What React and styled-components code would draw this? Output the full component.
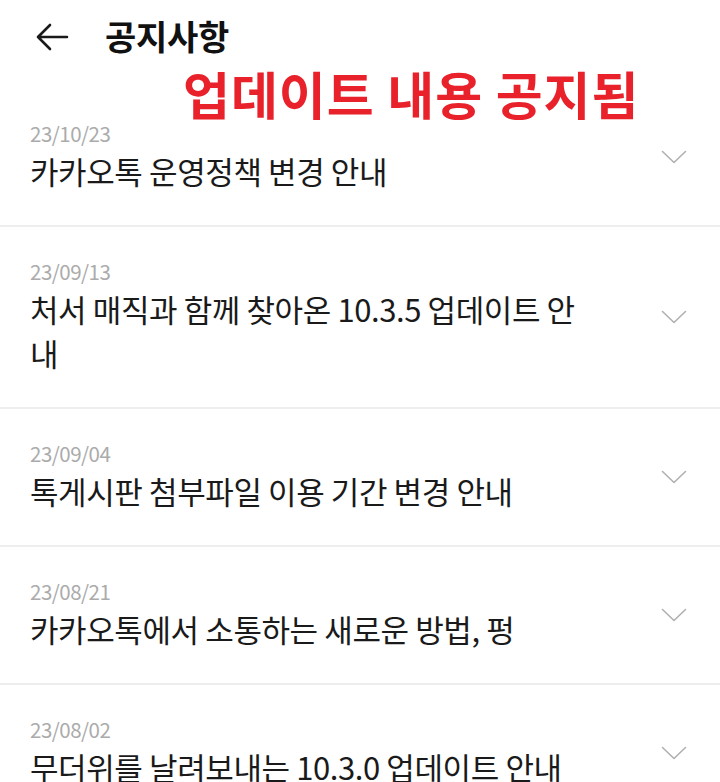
import styled, { createGlobalStyle } from 'styled-components';

const GlobalStyle = createGlobalStyle`
  html, body {
    margin: 0;
    padding: 0;
    background: #ffffff;
  }
  body {
    font-family: "Noto Sans CJK KR", "Noto Sans", sans-serif;
    color: #1a1a1a;
  }
`;

const notices = [
  { date: '23/10/23', title: '카카오톡 운영정책 변경 안내' },
  { date: '23/09/13', title: '처서 매직과 함께 찾아온 10.3.5 업데이트 안내' },
  { date: '23/09/04', title: '톡게시판 첨부파일 이용 기간 변경 안내' },
  { date: '23/08/21', title: '카카오톡에서 소통하는 새로운 방법, 펑' },
  { date: '23/08/02', title: '무더위를 날려보내는 10.3.0 업데이트 안내' },
];

export default function App() {
  return (
    <Page>
      <GlobalStyle />
      <Header>
        <BackButton aria-label="뒤로">
          <svg width="34" height="30" viewBox="0 0 34 30" fill="none">
            <path d="M32 15H3M15 3L3 15l12 12" stroke="#1a1a1a" strokeWidth="2.6" strokeLinecap="round" strokeLinejoin="round" />
          </svg>
        </BackButton>
        <Title>공지사항</Title>
      </Header>
      <Banner>업데이트 내용 공지됨</Banner>
      <List>
        {notices.map((n) => (
          <Item key={n.date}>
            <Texts>
              <DateText>{n.date}</DateText>
              <ItemTitle>{n.title}</ItemTitle>
            </Texts>
            <Chevron width="26" height="14" viewBox="0 0 26 14" fill="none">
              <path d="M1.5 1.5L13 12.5L24.5 1.5" stroke="#b0b0b0" strokeWidth="1.6" strokeLinecap="round" strokeLinejoin="round" />
            </Chevron>
          </Item>
        ))}
      </List>
    </Page>
  );
}

const Page = styled.div`
  position: relative;
  width: 720px;
  height: 782px;
  overflow: hidden;
  background: #fff;
`;

const Header = styled.header`
  display: flex;
  align-items: center;
  height: 74px;
  padding: 0 0 15px 35px;
  gap: 36px;
`;

const BackButton = styled.button`
  display: flex;
  align-items: center;
  padding: 0;
  border: none;
  background: none;
`;

const Title = styled.h1`
  margin: 0 0 4px;
  font-size: 34px;
  font-weight: 700;
  color: #111;
  letter-spacing: -0.3px;
`;

const Banner = styled.div`
  position: absolute;
  top: 58px;
  left: 183px;
  font-size: 51px;
  font-weight: 700;
  line-height: 70px;
  color: #e8212b;
  letter-spacing: 1px;
  white-space: nowrap;
`;

const List = styled.ul`
  margin: 0;
  padding: 0;
  list-style: none;
`;

const Item = styled.li`
  display: flex;
  align-items: center;
  justify-content: space-between;
  padding: 32px 33px 32px 30px;
  border-bottom: 2px solid #eeeeee;
`;

const Texts = styled.div`
  display: flex;
  flex-direction: column;
  gap: 4px;
  width: 560px;
`;

const DateText = styled.span`
  font-size: 20.5px;
  line-height: 24px;
  color: #ababab;
  letter-spacing: -0.5px;
`;

const ItemTitle = styled.span`
  font-size: 31px;
  line-height: 44px;
  color: #1a1a1a;
  letter-spacing: -0.4px;
`;

const Chevron = styled.svg`
  flex-shrink: 0;
`;
